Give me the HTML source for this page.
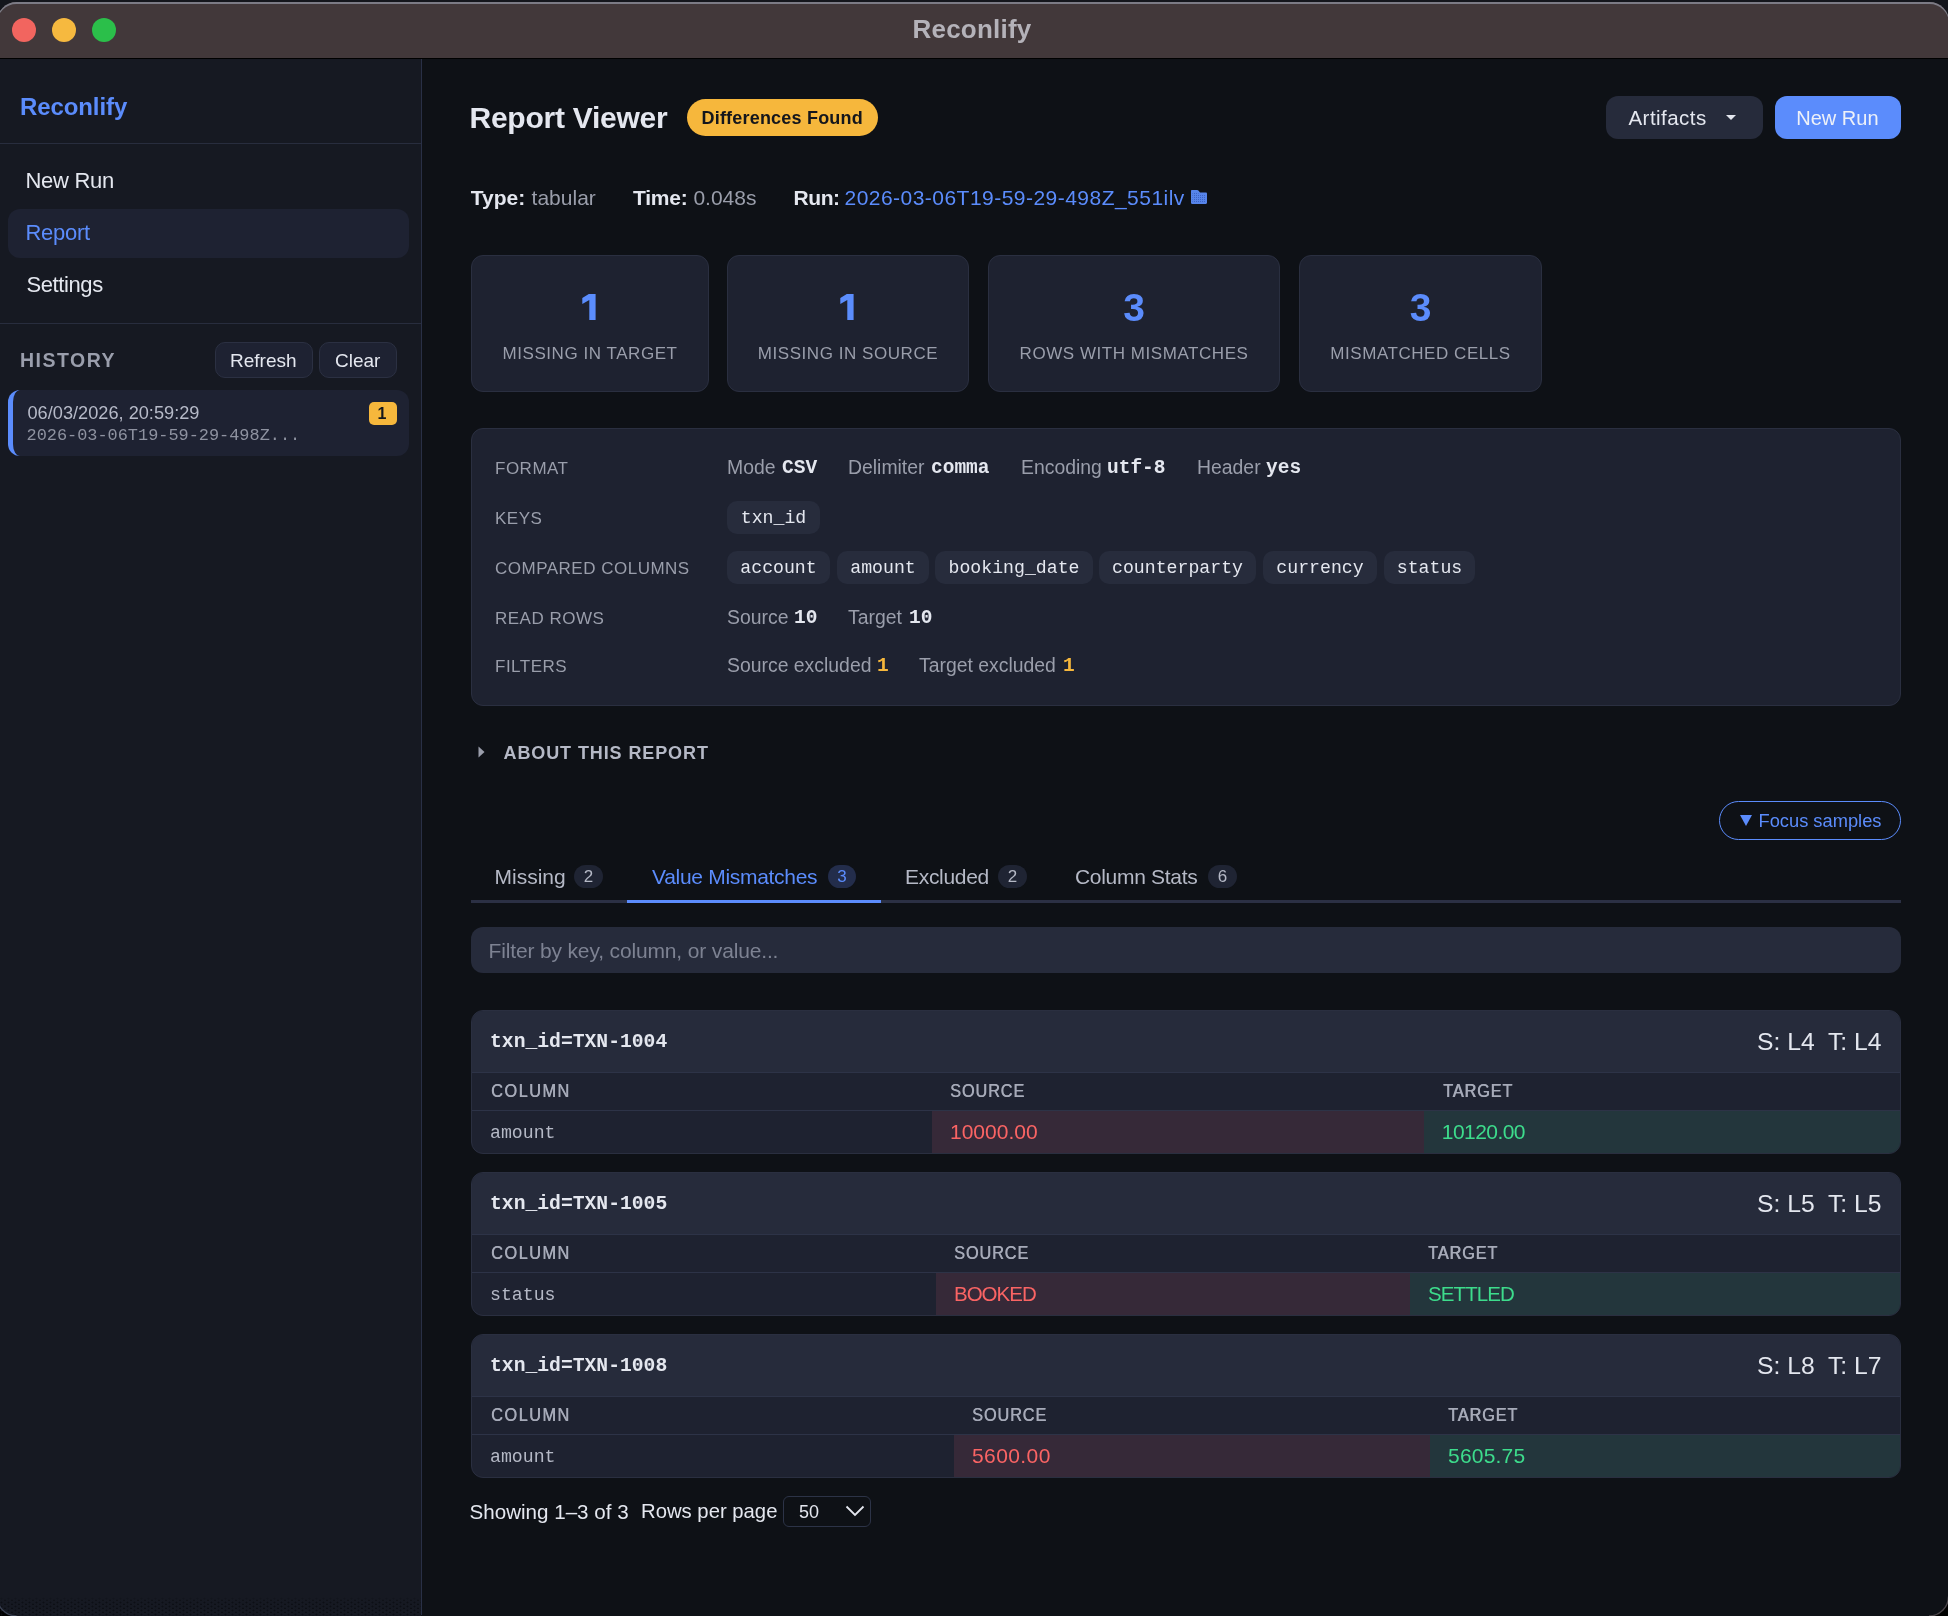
<!DOCTYPE html>
<html lang="en">
<head>
<meta charset="utf-8">
<title>Reconlify</title>
<style>
:root{
  --desk:#14161c;
  --bar:#42383a;
  --bg:#0e1116;
  --side:#161922;
  --surf:#1e2230;
  --surf2:#262b3b;
  --chip:#272c3c;
  --line:#2a2f40;
  --text:#e4e7ef;
  --text2:#9a9eab;
  --text3:#b5b9c6;
  --accent:#5b8cfc;
  --warn:#f6b73c;
  --red:#fa6464;
  --green:#3ddc8c;
}
*{box-sizing:border-box;margin:0;padding:0}
html,body{width:1948px;height:1616px;overflow:hidden;background:var(--desk)}
body{position:relative;font-family:"Liberation Sans",sans-serif;color:var(--text);font-size:20px}
#root{position:absolute;left:0;top:0;width:1948px;height:1616px;overflow:hidden;will-change:transform}
.abs{position:absolute}
.t{position:absolute;white-space:nowrap;line-height:1}
.mono{font-family:"Liberation Mono",monospace}
.b{font-weight:700}

/* window chrome */
#winbg{left:-3px;top:2px;width:1951.500px;height:1614px;border-radius:19.500px;background:var(--bg)}
.blk{position:absolute;top:1596px;width:20px;height:20px;background:#000}
#bar{left:-3px;top:2px;width:1951.500px;height:55.500px;background:var(--bar);border-radius:19.500px 19.500px 0 0;box-shadow:inset 0 2px 0 #7c7b85}
#barline{left:0;top:57.500px;width:1948px;height:1.600px;background:#000}
.dot{position:absolute;top:18px;width:24px;height:24px;border-radius:50%}

/* sidebar */
#side{left:-3px;top:59px;width:424px;height:1557px;background:var(--side);border-radius:0 0 0 19.500px}
#dots{left:0;top:1597px;width:421px;height:19px;opacity:.9;background-image:radial-gradient(circle at 1.500px 1.500px,#0d0f14 .65px,transparent 1.250px),radial-gradient(circle at 5px 3.500px,#0d0f14 .65px,transparent 1.250px);background-size:7px 4px;-webkit-mask-image:linear-gradient(to bottom,transparent 0,#000 5px)}
#sideb{left:421px;top:59px;width:1px;height:1556px;background:#293046}
.hr{position:absolute;left:0;width:421px;height:1px;background:#282d3e}
#navsel{left:8px;top:209px;width:401px;height:49px;border-radius:12px;background:#1e2232}
.sbtn{position:absolute;top:342px;height:36px;border-radius:10px;background:#1e2232;border:1px solid #2b3042}
#hist{left:8px;top:390px;width:401px;height:66px;border-radius:12px;background:#1e2232;border-left:5px solid var(--accent)}
#hbadge{left:369px;top:402px;width:28px;height:23px;border-radius:5px;background:var(--warn)}

/* header */
#status{left:687px;top:99px;width:191px;height:37px;border-radius:19px;background:var(--warn)}
.btn{position:absolute;top:96px;height:43px;border-radius:12px}

/* stat cards */
.card{position:absolute;top:255px;height:137px;border-radius:12px;background:var(--surf);border:1px solid var(--line)}
.num{position:absolute;top:288px;font-size:39px;font-weight:700;color:var(--accent);text-align:center;line-height:1}
.lab{position:absolute;top:345px;font-size:17px;letter-spacing:.55px;color:var(--text2);text-align:center;line-height:1;white-space:nowrap}

/* info panel */
#info{left:471px;top:428px;width:1430px;height:278px;border-radius:12px;background:var(--surf);border:1px solid var(--line)}
.il{position:absolute;left:495px;font-size:17px;letter-spacing:.5px;color:var(--text2);line-height:1;white-space:nowrap}
.iv{position:absolute;font-size:19.400px;color:var(--text2);line-height:1;white-space:nowrap}
.im{position:absolute;font-family:"Liberation Mono",monospace;font-weight:700;font-size:19.5px;color:var(--text);line-height:1;white-space:nowrap}
.chip{position:absolute;height:33px;border-radius:10px;background:var(--chip);font-family:"Liberation Mono",monospace;font-size:18.2px;line-height:35px;text-align:center;color:var(--text)}

/* tabs */
#tabline{left:471px;top:900px;width:1430px;height:3px;background:#2b3044}
#tabact{left:627px;top:900px;width:254px;height:3px;background:var(--accent)}
.tab{position:absolute;top:865.700px;font-size:21px;letter-spacing:-.3px;line-height:1;color:var(--text3);white-space:nowrap}
.tb{position:absolute;top:865px;height:23px;border-radius:12px;background:#1f2433;font-size:17px;line-height:23px;text-align:center;color:var(--text3)}
#focus{left:1719px;top:801px;width:182px;height:39px;border-radius:20px;border:1.5px solid var(--accent)}
#filter{left:471px;top:927px;width:1430px;height:46px;border-radius:12px;background:var(--surf2)}

/* result cards */
.rc{position:absolute;left:471px;width:1430px;height:144px;border-radius:12px;background:var(--surf);border:1px solid var(--line);overflow:hidden}
.rc .hd{position:absolute;left:0;top:0;width:100%;height:62px;background:var(--surf2);border-bottom:1px solid #2d3347}
.rc .ln{position:absolute;left:0;top:99px;width:100%;height:1px;background:#2d3347}
.rc .key{position:absolute;left:18px;top:21.500px;font-family:"Liberation Mono",monospace;font-weight:700;font-size:19.7px;line-height:1;white-space:nowrap}
.rc .st{position:absolute;right:18.500px;top:18.500px;font-size:24.700px;line-height:1;white-space:pre;color:var(--text)}
.rc .th{position:absolute;top:70.800px;font-size:18.500px;font-weight:400;text-shadow:.6px 0 0 #a6aab8;letter-spacing:1px;transform:scaleX(.88);transform-origin:0 50%;color:#a6aab8;line-height:1;white-space:nowrap}
.rc .col{position:absolute;left:18px;top:113px;font-family:"Liberation Mono",monospace;font-size:18.2px;line-height:1;color:var(--text3)}
.rc .src{position:absolute;top:100px;height:44px;background:#362938}
.rc .tgt{position:absolute;top:100px;height:44px;right:0;background:#23363c}
.rc .val{position:absolute;top:109.500px;font-size:21px;line-height:1;white-space:nowrap}

/* pagination */
.pg{position:absolute;top:1502px;font-size:20.600px;line-height:1;white-space:nowrap;color:var(--text)}
#sel{left:783px;top:1496px;width:88px;height:31px;border-radius:6px;border:1px solid #2c3347;background:var(--bg)}
</style>
</head>
<body>
<div id="root">
<div class="blk" style="left:0"></div><div class="blk" style="left:1928px"></div>
<div class="abs" id="winbg"></div>

<!-- title bar -->
<div class="abs" id="bar"></div>
<div class="dot" style="left:12px;background:#f2655f"></div>
<div class="dot" style="left:52px;background:#f6b93f"></div>
<div class="dot" style="left:92px;background:#2bbf4a"></div>
<div class="t b" id="ttl" style="left:912.500px;top:16px;font-size:26px;letter-spacing:.22px;color:#b4b2b9">Reconlify</div>
<div class="abs" id="barline"></div>

<!-- sidebar -->
<div class="abs" id="side"></div>
<div class="abs" id="sideb"></div>
<div class="abs" id="dots"></div>
<svg class="abs" style="left:0;top:1594px" width="24" height="22" viewBox="0 0 24 22"><path d="M-3 2.500a19.500 19.500 0 0 0 19.500 19.500" fill="none" stroke="#56607a" stroke-opacity=".6" stroke-width="1.400"/></svg>
<svg class="abs" style="left:1924px;top:1594px" width="24" height="22" viewBox="0 0 24 22"><path d="M24.500 2.500a19.500 19.500 0 0 1-19.500 19.500" fill="none" stroke="#5a5258" stroke-opacity=".8" stroke-width="1.400"/></svg>
<div class="t b" id="logo" style="left:20px;top:94.500px;font-size:24px;letter-spacing:-.1px;color:var(--accent)">Reconlify</div>
<div class="hr" style="top:143px"></div>
<div class="t" id="nav1" style="left:25.500px;top:169.500px;font-size:22px;letter-spacing:-.3px">New Run</div>
<div class="abs" id="navsel"></div>
<div class="t" id="nav2" style="left:25.500px;top:222px;font-size:22px;letter-spacing:-.3px;color:var(--accent)">Report</div>
<div class="t" id="nav3" style="left:26.500px;top:274px;font-size:22px;letter-spacing:-.4px">Settings</div>
<div class="hr" style="top:323px"></div>
<div class="t b" id="hlabel" style="left:20px;top:351px;font-size:19.5px;letter-spacing:1.5px;color:#9a9eac">HISTORY</div>
<div class="sbtn" style="left:215px;width:98px"></div>
<div class="t" id="sb1" style="left:230px;top:351px;font-size:19px">Refresh</div>
<div class="sbtn" style="left:319px;width:78px"></div>
<div class="t" id="sb2" style="left:335px;top:351px;font-size:19px">Clear</div>
<div class="abs" id="hist"></div>
<div class="t" id="h1" style="left:27.500px;top:403.500px;font-size:18.200px;color:#b6bac8">06/03/2026, 20:59:29</div>
<div class="t mono" id="h2" style="left:26.500px;top:427.500px;font-size:16.900px;color:#8e92a0">2026-03-06T19-59-29-498Z...</div>
<div class="abs" id="hbadge"></div>
<div class="t b" id="hb" style="left:377.500px;top:405.500px;font-size:16px;color:#15171c">1</div>

<!-- header -->
<div class="t b" id="h1t" style="left:469.500px;top:103px;font-size:30px;letter-spacing:-.25px">Report Viewer</div>
<div class="abs" id="status"></div>
<div class="t b" id="st" style="left:701.500px;top:108.700px;font-size:18px;letter-spacing:.2px;color:#14161c">Differences Found</div>
<div class="btn" style="left:1606px;width:157px;background:var(--surf2)"></div>
<div class="t" id="bt1" style="left:1628.500px;top:108px;font-size:20.500px;letter-spacing:.45px">Artifacts</div>
<svg class="abs" style="left:1726px;top:115px" width="10" height="5" viewBox="0 0 10 5"><path d="M0 0h10L5 5z" fill="#e4e7ef"/></svg>
<div class="btn" style="left:1775px;width:126px;background:var(--accent)"></div>
<div class="t" id="bt2" style="left:1796.300px;top:108px;font-size:20px;color:#eef1f8">New Run</div>

<!-- meta -->
<div class="t b" id="m1" style="left:470.8px;top:187px;font-size:21px;letter-spacing:0px">Type:</div>
<div class="t" id="m2" style="left:531.6px;top:187px;font-size:21px;letter-spacing:0px;color:var(--text2)">tabular</div>
<div class="t b" id="m3" style="left:633px;top:187px;font-size:21px;letter-spacing:-0.25px">Time:</div>
<div class="t" id="m4" style="left:693.4px;top:187px;font-size:21px;letter-spacing:0px;color:var(--text2)">0.048s</div>
<div class="t b" id="m5" style="left:793.5px;top:187px;font-size:21px;letter-spacing:-0.4px">Run:</div>
<div class="t" id="m6" style="left:844.5px;top:187px;font-size:21px;letter-spacing:0.47px;color:var(--accent)">2026-03-06T19-59-29-498Z_551ilv</div>


<!-- folder icon -->
<svg class="abs" id="folder" style="left:1191px;top:190px" width="16" height="14" viewBox="0 0 16 14"><defs><pattern id="fd" width="2" height="2" patternUnits="userSpaceOnUse"><rect width="2" height="2" fill="#5684ea"/><rect x="1" y="1" width="1" height="1" fill="#3d63c4"/></pattern></defs><path d="M0 1C0 .4.400 0 1 0h5.200c.5 0 .9.200 1.200.6L9 2.500h5.800c.7 0 1.200.5 1.200 1.200v9.100c0 .7-.5 1.200-1.200 1.200H1c-.6 0-1-.5-1-1.200z" fill="#5684ea"/><path d="M1.500 2.500h5l2 2h6v8h-13z" fill="url(#fd)"/></svg>

<!-- stat cards -->
<div class="card" style="left:471px;width:238px"></div>
<svg class="abs" style="left:581.5px;top:293px" width="15" height="28" viewBox="0 0 15 28"><path d="M6.800.9h6.800v26.200H7.300V7L.3 10.900V5.100z" fill="#5b8dfd"/></svg>
<div class="lab" id="l1" style="left:471px;width:238px">MISSING IN TARGET</div>
<div class="card" style="left:727px;width:242px"></div>
<svg class="abs" style="left:839.5px;top:293px" width="15" height="28" viewBox="0 0 15 28"><path d="M6.800.9h6.800v26.200H7.300V7L.3 10.900V5.100z" fill="#5b8dfd"/></svg>
<div class="lab" id="l2" style="left:727px;width:242px">MISSING IN SOURCE</div>
<div class="card" style="left:988px;width:292px"></div>
<div class="num" style="left:988px;width:292px">3</div>
<div class="lab" id="l3" style="left:988px;width:292px">ROWS WITH MISMATCHES</div>
<div class="card" style="left:1299px;width:243px"></div>
<div class="num" style="left:1299px;width:243px">3</div>
<div class="lab" id="l4" style="left:1299px;width:243px">MISMATCHED CELLS</div>

<!-- info panel -->
<div class="abs" id="info"></div>
<div class="il" id="il1" style="top:460px">FORMAT</div>
<div class="iv" id="a1" style="left:727px;top:458px">Mode</div>
<div class="im" id="a2" style="left:782px;top:459px">CSV</div>
<div class="iv" id="a3" style="left:848px;top:458px">Delimiter</div>
<div class="im" id="a4" style="left:931px;top:459px">comma</div>
<div class="iv" id="a5" style="left:1021px;top:458px">Encoding</div>
<div class="im" id="a6" style="left:1107px;top:459px">utf-8</div>
<div class="iv" id="a7" style="left:1197px;top:458px">Header</div>
<div class="im" id="a8" style="left:1266px;top:459px">yes</div>

<div class="il" id="il2" style="top:510px">KEYS</div>
<div class="chip" style="left:727px;top:501px;width:93px">txn_id</div>

<div class="il" id="il3" style="top:560px">COMPARED COLUMNS</div>
<div class="chip" style="left:727px;top:551px;width:103px">account</div>
<div class="chip" style="left:837px;top:551px;width:92px">amount</div>
<div class="chip" style="left:935px;top:551px;width:158px">booking_date</div>
<div class="chip" style="left:1099px;top:551px;width:157px">counterparty</div>
<div class="chip" style="left:1263px;top:551px;width:114px">currency</div>
<div class="chip" style="left:1384px;top:551px;width:91px">status</div>

<div class="il" id="il4" style="top:610px">READ ROWS</div>
<div class="iv" id="b1" style="left:727px;top:608px">Source</div>
<div class="im" id="b2" style="left:794px;top:609px">10</div>
<div class="iv" id="b3" style="left:848px;top:608px">Target</div>
<div class="im" id="b4" style="left:909px;top:609px">10</div>

<div class="il" id="il5" style="top:658px">FILTERS</div>
<div class="iv" id="c1" style="left:727px;top:656px">Source excluded</div>
<div class="im" id="c2" style="left:877px;top:657px;color:var(--warn)">1</div>
<div class="iv" id="c3" style="left:919px;top:656px">Target excluded</div>
<div class="im" id="c4" style="left:1063px;top:657px;color:var(--warn)">1</div>

<!-- about -->
<svg class="abs" style="left:478px;top:746px" width="7" height="12" viewBox="0 0 7 12"><path d="M.5.5v11L6.500 6z" fill="#9a9eab"/></svg>
<div class="t b" id="about" style="left:503.500px;top:743.500px;font-size:18px;letter-spacing:.9px;color:var(--text3)">ABOUT THIS REPORT</div>

<!-- focus samples -->
<div class="abs" id="focus"></div>
<svg class="abs" style="left:1739.500px;top:815px" width="12" height="11" viewBox="0 0 12 11"><path d="M0 0h12L6 11z" fill="#5b8cfc"/></svg>
<div class="t" id="fs" style="left:1758.500px;top:811.700px;font-size:18.300px;color:var(--accent)">Focus samples</div>

<!-- tabs -->
<div class="abs" id="tabline"></div>
<div class="abs" id="tabact"></div>
<div class="tab" id="t1" style="left:494.500px;letter-spacing:0">Missing</div>
<div class="tb" style="left:574px;width:29px">2</div>
<div class="tab" id="t2" style="left:652px;color:var(--accent)">Value Mismatches</div>
<div class="tb" style="left:828px;width:28px;background:#232d4b;color:var(--accent)">3</div>
<div class="tab" id="t3" style="left:905px">Excluded</div>
<div class="tb" style="left:998px;width:29px">2</div>
<div class="tab" id="t4" style="left:1075px">Column Stats</div>
<div class="tb" style="left:1208px;width:29px">6</div>

<!-- filter -->
<div class="abs" id="filter"></div>
<div class="t" id="ph" style="left:488.500px;top:940px;font-size:21px;letter-spacing:-.15px;color:#7d8292">Filter by key, column, or value...</div>

<!-- result cards -->
<div class="rc" style="top:1010px">
  <div class="hd"></div>
  <div class="key" id="k1">txn_id=TXN-1004</div>
  <div class="st" id="s1">S: L4  T: L4</div>
  <div class="th" style="left:18.500px;letter-spacing:1.700px">COLUMN</div>
  <div class="th" id="ths1" style="left:478px">SOURCE</div>
  <div class="th" id="tht1" style="left:970.500px">TARGET</div>
  <div class="ln"></div>
  <div class="col" id="rcol1">amount</div>
  <div class="src" style="left:460px;width:492px"></div>
  <div class="tgt" style="left:952px"></div>
  <div class="val" id="vs1" style="left:478px;color:var(--red)">10000.00</div>
  <div class="val" id="vt1" style="letter-spacing:-.55px;left:969.800px;color:var(--green)">10120.00</div>
</div>
<div class="rc" style="top:1172px">
  <div class="hd"></div>
  <div class="key" id="k2">txn_id=TXN-1005</div>
  <div class="st" id="s2">S: L5  T: L5</div>
  <div class="th" style="left:18.500px;letter-spacing:1.700px">COLUMN</div>
  <div class="th" id="ths2" style="left:482px">SOURCE</div>
  <div class="th" id="tht2" style="left:956px">TARGET</div>
  <div class="ln"></div>
  <div class="col" id="rcol2">status</div>
  <div class="src" style="left:464px;width:474px"></div>
  <div class="tgt" style="left:938px"></div>
  <div class="val" id="vs2" style="top:110.800px;font-size:20.500px;letter-spacing:-1px;left:482px;color:var(--red)">BOOKED</div>
  <div class="val" id="vt2" style="top:110.800px;font-size:20.500px;letter-spacing:-.9px;left:956px;color:var(--green)">SETTLED</div>
</div>
<div class="rc" style="top:1334px">
  <div class="hd"></div>
  <div class="key" id="k3">txn_id=TXN-1008</div>
  <div class="st" id="s3">S: L8  T: L7</div>
  <div class="th" style="left:18.500px;letter-spacing:1.700px">COLUMN</div>
  <div class="th" id="ths3" style="left:500px">SOURCE</div>
  <div class="th" id="tht3" style="left:976px">TARGET</div>
  <div class="ln"></div>
  <div class="col" id="rcol3">amount</div>
  <div class="src" style="left:482px;width:476px"></div>
  <div class="tgt" style="left:958px"></div>
  <div class="val" id="vs3" style="letter-spacing:.4px;left:500px;color:var(--red)">5600.00</div>
  <div class="val" id="vt3" style="letter-spacing:.2px;left:976px;color:var(--green)">5605.75</div>
</div>

<!-- pagination -->
<div class="pg" id="p1" style="left:469.500px">Showing 1–3 of 3</div>
<div class="pg" id="p2" style="left:641px;top:1501px;font-size:20.300px;letter-spacing:0">Rows per page</div>
<div class="abs" id="sel"></div>
<div class="t" id="p3" style="left:799px;top:1503px;font-size:18px">50</div>
<svg class="abs" style="left:845px;top:1505px" width="20" height="12" viewBox="0 0 20 12"><path d="M1.500 1.500L10 10l8.500-8.500" fill="none" stroke="#e4e7ef" stroke-width="1.800"/></svg>
</div>
</body>
</html>
